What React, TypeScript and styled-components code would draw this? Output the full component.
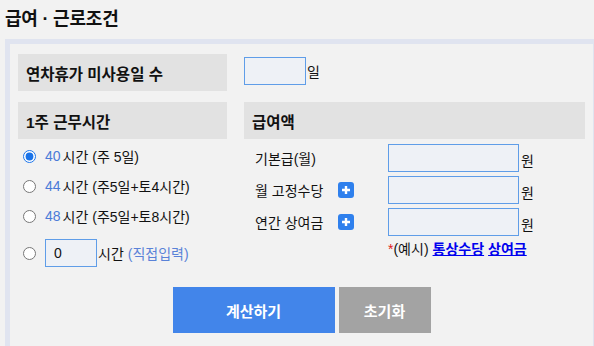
import styled, { createGlobalStyle } from "styled-components";
import { useState } from "react";

const GlobalStyle = createGlobalStyle`
  html, body {
    margin: 0;
    padding: 0;
    background: #f2f2f2;
  }
  body {
    font-family: "Liberation Sans", "Noto Sans CJK KR", sans-serif;
    color: #111;
  }
`;

const Page = styled.div`
  width: 594px;
  height: 346px;
  overflow: hidden;
  padding: 7px 0 0 5px;
  box-sizing: border-box;
`;

const Title = styled.h2`
  margin: 0;
  height: 32px;
  font-size: 18px;
  font-weight: bold;
  line-height: 25px;
  letter-spacing: -0.2px;
`;

const Panel = styled.div`
  border-left: 5px solid #e0e4f0;
  border-top: 5px solid #e0e4f0;
  border-right: 1px solid #e0e4f0;
  padding: 10px 8px 20px 8px;
  height: 320px;
  box-sizing: border-box;
`;

const Grid = styled.div`
  display: grid;
  grid-template-columns: 209px 1fr;
  column-gap: 17px;
`;

const HeadCell = styled.div<{ $below?: number }>`
  background: #e2e2e2;
  height: 37px;
  display: flex;
  align-items: center;
  padding-left: 8px;
  margin-bottom: ${(p) => p.$below ?? 0}px;
  font-size: 15.5px;
  font-weight: bold;
`;

const Field = styled.input<{ $w: number }>`
  width: ${(p) => p.$w}px;
  height: 28px;
  box-sizing: border-box;
  border: 1px solid #5f9de8;
  background: #eef1f6;
  padding: 0 8px;
  font-family: "Liberation Sans", "Noto Sans CJK KR", sans-serif;
  font-size: 14px;
  color: #111;
  outline: none;
`;

const Unit = styled.span<{ $gap?: number }>`
  margin-left: ${(p) => p.$gap ?? 1}px;
  font-size: 14px;
  margin-top: 4px;
`;

const InlineRow = styled.div`
  display: flex;
  align-items: flex-start;
  padding-top: 3px;
  margin-bottom: 11px;
`;

const RadioList = styled.div`
  display: flex;
  flex-direction: column;
  padding-top: 2px;
`;

const RadioRow = styled.label<{ $extra?: number }>`
  display: flex;
  align-items: center;
  height: 30px;
  margin-top: ${(p) => p.$extra ?? 0}px;
  font-size: 14px;
  cursor: pointer;
`;

const Radio = styled.input`
  width: 13px;
  height: 13px;
  margin: 0 9px 0 5px;
  accent-color: #1a73e8;
`;

const Hours = styled.span`
  color: #4a7ad8;
  margin-right: 2px;
`;

const Hint = styled.span`
  color: #5a82d8;
  margin-left: 4px;
`;

const SalaryForm = styled.div`
  display: flex;
  flex-direction: column;
  gap: 4px;
  padding-top: 5px;
`;

const SalaryRow = styled.div`
  display: grid;
  grid-template-columns: 83px 50px 131px auto;
  justify-content: start;
  align-items: center;
  padding-left: 11px;
  font-size: 14px;
`;

const PlusBtn = styled.span`
  width: 16px;
  height: 16px;
  border-radius: 3px;
  background: #2f80ed;
  display: flex;
  align-items: center;
  justify-content: center;
`;

const Note = styled.div`
  padding-left: 144px;
  font-size: 14px;
  margin-top: -2px;
`;

const Star = styled.span`
  color: #e02020;
`;

const NoteLink = styled.a`
  color: #0000ee;
  font-weight: bold;
  text-decoration: underline;
  margin-left: 4px;
`;

const Actions = styled.div`
  display: flex;
  justify-content: center;
  gap: 4px;
  margin-top: 19px;
`;

const Btn = styled.button<{ $w: number; $bg: string }>`
  width: ${(p) => p.$w}px;
  height: 46px;
  border: none;
  background: ${(p) => p.$bg};
  color: #fff;
  font-family: "Liberation Sans", "Noto Sans CJK KR", sans-serif;
  font-size: 15px;
  font-weight: bold;
  cursor: pointer;
`;

function Plus() {
  return (
    <PlusBtn>
      <svg width="10" height="10" viewBox="0 0 10 10">
        <path d="M5 1v8M1 5h8" stroke="#fff" strokeWidth="2.4" />
      </svg>
    </PlusBtn>
  );
}

const options = [
  { h: "40", text: "시간 (주 5일)" },
  { h: "44", text: "시간 (주5일+토4시간)" },
  { h: "48", text: "시간 (주5일+토8시간)" },
];

const salaryRows = [
  { label: "기본급(월)", plus: false },
  { label: "월 고정수당", plus: true },
  { label: "연간 상여금", plus: true },
];

export default function App() {
  const [sel, setSel] = useState(0);

  return (
    <>
      <GlobalStyle />
      <Page>
        <Title>급여 · 근로조건</Title>
        <Panel>
          <Grid>
            <HeadCell $below={11}>연차휴가 미사용일 수</HeadCell>
            <InlineRow>
              <Field $w={62} />
              <Unit>일</Unit>
            </InlineRow>

            <HeadCell>1주 근무시간</HeadCell>
            <HeadCell>급여액</HeadCell>

            <RadioList>
              {options.map((o, i) => (
                <RadioRow key={o.h}>
                  <Radio
                    type="radio"
                    name="hours"
                    checked={sel === i}
                    onChange={() => setSel(i)}
                  />
                  <Hours>{o.h}</Hours>
                  {o.text}
                </RadioRow>
              ))}
              <RadioRow $extra={7}>
                <Radio
                  type="radio"
                  name="hours"
                  checked={sel === 3}
                  onChange={() => setSel(3)}
                />
                <Field $w={52} defaultValue="0" />
                <span style={{ marginLeft: 1 }}>시간</span>
                <Hint>(직접입력)</Hint>
              </RadioRow>
            </RadioList>

            <SalaryForm>
              {salaryRows.map((r) => (
                <SalaryRow key={r.label}>
                  <span>{r.label}</span>
                  <span>{r.plus && <Plus />}</span>
                  <Field $w={131} />
                  <Unit $gap={2}>원</Unit>
                </SalaryRow>
              ))}
              <Note>
                <Star>*</Star>(예시)
                <NoteLink href="#">통상수당</NoteLink>
                <NoteLink href="#">상여금</NoteLink>
              </Note>
            </SalaryForm>
          </Grid>
          <Actions>
            <Btn $w={162} $bg="#4285ea">계산하기</Btn>
            <Btn $w={92} $bg="#a3a3a3">초기화</Btn>
          </Actions>
        </Panel>
      </Page>
    </>
  );
}
